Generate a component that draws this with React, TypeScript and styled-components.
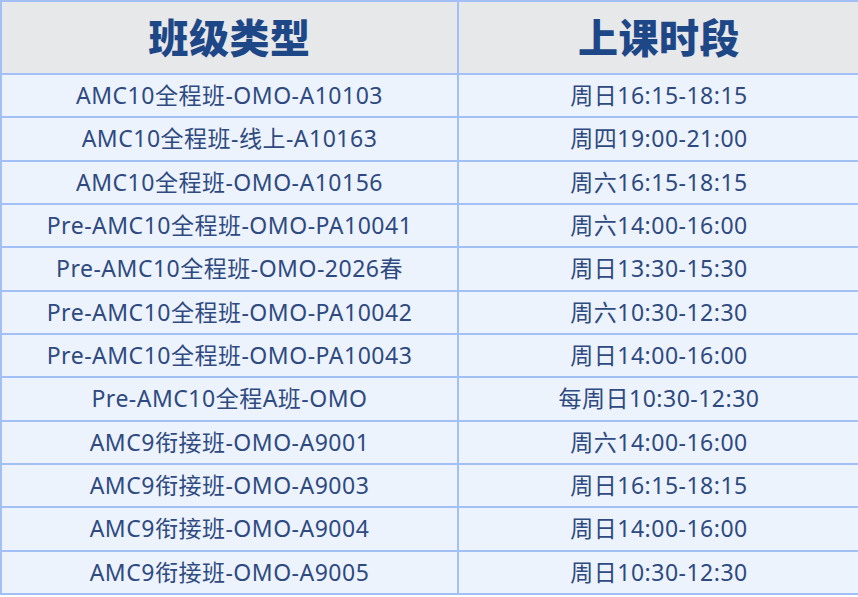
import React from 'react'
import styled, { createGlobalStyle } from 'styled-components'

const rows: [string, string][] = [
  ['AMC10全程班-OMO-A10103', '周日16:15-18:15'],
  ['AMC10全程班-线上-A10163', '周四19:00-21:00'],
  ['AMC10全程班-OMO-A10156', '周六16:15-18:15'],
  ['Pre-AMC10全程班-OMO-PA10041', '周六14:00-16:00'],
  ['Pre-AMC10全程班-OMO-2026春', '周日13:30-15:30'],
  ['Pre-AMC10全程班-OMO-PA10042', '周六10:30-12:30'],
  ['Pre-AMC10全程班-OMO-PA10043', '周日14:00-16:00'],
  ['Pre-AMC10全程A班-OMO', '每周日10:30-12:30'],
  ['AMC9衔接班-OMO-A9001', '周六14:00-16:00'],
  ['AMC9衔接班-OMO-A9003', '周日16:15-18:15'],
  ['AMC9衔接班-OMO-A9004', '周日14:00-16:00'],
  ['AMC9衔接班-OMO-A9005', '周日10:30-12:30'],
]

const GlobalStyle = createGlobalStyle`
  html, body {
    margin: 0;
    padding: 0;
    background: #ffffff;
  }
  body {
    font-family: "Noto Sans", "Noto Sans CJK SC", sans-serif;
  }
`

const Table = styled.div`
  display: grid;
  grid-template-columns: 455px 400px;
  grid-template-rows: 71px repeat(12, 1fr);
  width: 858px;
  height: 595px;
  box-sizing: border-box;
  border: 2px solid #a3c0f6;
  border-right-width: 3px;
  background: #a3c0f6;
  gap: 2px;
`

const HeadCell = styled.div`
  display: flex;
  align-items: center;
  justify-content: center;
  padding-bottom: 4px;
  background: #e7e8ea;
  color: #1e4787;
  font-family: "Noto Sans CJK SC", sans-serif;
  font-weight: 900;
  font-size: 40px;
  letter-spacing: 0.5px;
`

const Cell = styled.div`
  display: flex;
  align-items: center;
  justify-content: center;
  padding-bottom: 3px;
  background: #edf3fd;
  color: #2e4a80;
  font-size: 23px;
  letter-spacing: 0.5px;
  white-space: nowrap;
`

export default function App() {
  return (
    <>
      <GlobalStyle />
      <Table>
        <HeadCell>班级类型</HeadCell>
        <HeadCell>上课时段</HeadCell>
        {rows.map(([name, time]) => (
          <React.Fragment key={name}>
            <Cell>{name}</Cell>
            <Cell>{time}</Cell>
          </React.Fragment>
        ))}
      </Table>
    </>
  )
}
